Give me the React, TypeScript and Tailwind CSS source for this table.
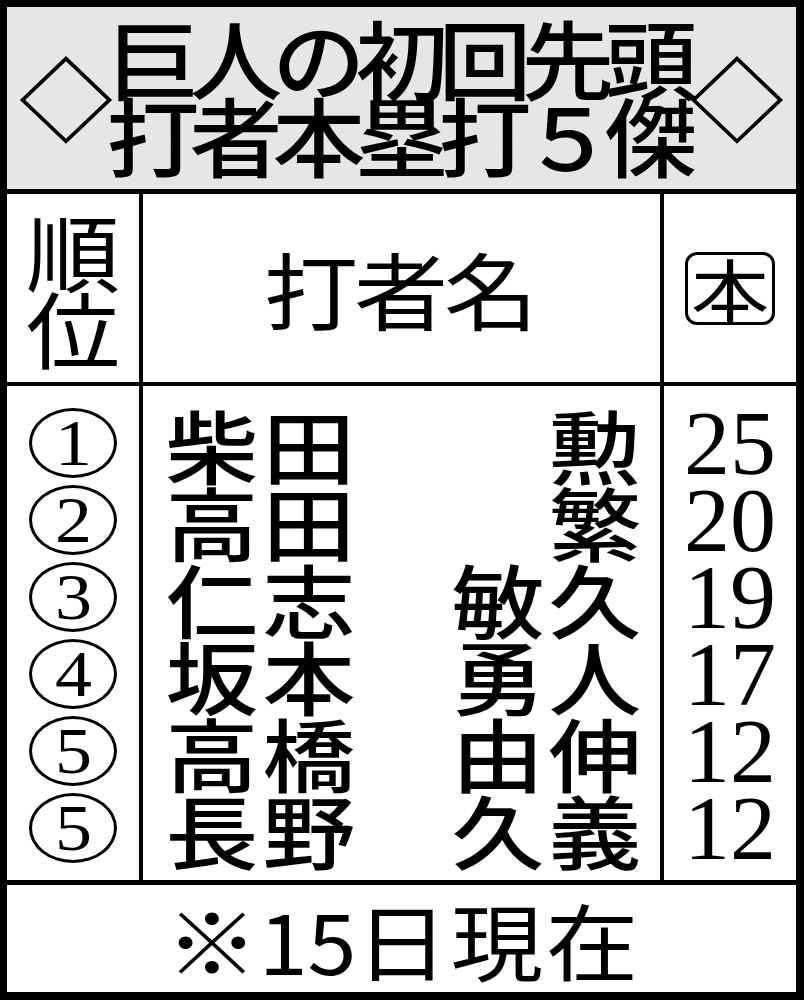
import React from "react";

const JP = "font-['Noto_Sans_CJK_JP','Noto_Sans_CJK_SC',sans-serif]";
const SERIF = "font-['Liberation_Serif','Times_New_Roman',serif]";

function Chars({ text, box, inner }: { text: string; box: string; inner: string }) {
  return (
    <>
      {Array.from(text).map((c, i) => (
        <span key={i} className={`inline-flex justify-center ${box}`}>
          <span className={`inline-block ${inner}`}>{c}</span>
        </span>
      ))}
    </>
  );
}

const rows = [
  { n: "1", f: "柴田", g: "　勲", hr: "25" },
  { n: "2", f: "高田", g: "　繁", hr: "20" },
  { n: "3", f: "仁志", g: "敏久", hr: "19" },
  { n: "4", f: "坂本", g: "勇人", hr: "17" },
  { n: "5", f: "高橋", g: "由伸", hr: "12" },
  { n: "5", f: "長野", g: "久義", hr: "12" },
];

export default function App() {
  return (
    <div className={`w-[804px] h-[1000px] bg-white text-black ${JP} font-medium border-l-[7px] border-t-[7px] border-r-[8px] border-b-[8px] border-black flex flex-col`}>
      {/* Title */}
      <div className="h-[187px] shrink-0 bg-[#e6e6e6] border-b-[5px] border-black flex items-center justify-center pb-[6px]">
        <div className="w-[90px] flex justify-center text-[90px] leading-none">
          <span className="inline-block scale-x-[1.05]">◇</span>
        </div>
        <div className="flex flex-col text-[86px] leading-none">
          <div className="h-[77px] flex items-center">
            <Chars text="巨人の初回先頭" box="w-[83px]" inner="scale-x-[1.08]" />
          </div>
          <div className="h-[77px] flex items-center">
            <Chars text="打者本塁打５傑" box="w-[83px]" inner="scale-x-[1.08]" />
          </div>
        </div>
        <div className="w-[90px] flex justify-center text-[90px] leading-none">
          <span className="inline-block scale-x-[1.05]">◇</span>
        </div>
      </div>

      {/* Header row */}
      <div className="h-[192px] shrink-0 border-b-[4px] border-black flex">
        <div className="w-[136px] shrink-0 border-r-[4px] border-black flex flex-col items-center justify-center text-[84px] leading-none font-normal">
          <div className="h-[77px] flex items-center">
            <span className="inline-block scale-x-[1.12]">順</span>
          </div>
          <div className="h-[77px] flex items-center">
            <span className="inline-block scale-x-[1.12]">位</span>
          </div>
        </div>
        <div className="w-[521px] shrink-0 border-r-[4px] border-black flex items-center justify-center text-[84px] leading-none font-normal">
          <Chars text="打者名" box="w-[90px]" inner="scale-x-[1.12]" />
        </div>
        <div className="w-[132px] shrink-0 flex items-center justify-center">
          <div className="w-[90px] h-[73px] border-[3.5px] border-black rounded-[12px] flex items-center justify-center text-[68px] leading-none font-normal">
            <span className="inline-block scale-x-[1.15]">本</span>
          </div>
        </div>
      </div>

      {/* Data rows */}
      <div className="h-[499px] shrink-0 border-b-[5px] border-black flex">
        <div className="w-[136px] shrink-0 border-r-[4px] border-black flex flex-col items-center pt-[18px]">
          {rows.map((r, i) => (
            <div key={i} className="h-[77px] flex items-center justify-center">
              <div className={`w-[88px] h-[70px] rounded-[50%] border-[3px] border-black flex items-center justify-center ${SERIF} font-normal text-[66px] leading-none`}>
                <span className="inline-block scale-x-[1.12]">{r.n}</span>
              </div>
            </div>
          ))}
        </div>
        <div className="w-[521px] shrink-0 border-r-[4px] border-black flex flex-col pt-[18px] pl-[20px] pr-[17px] text-[80px] leading-none">
          {rows.map((r, i) => (
            <div key={i} className="h-[77px] flex items-center justify-between">
              <div className="flex">
                <Chars text={r.f} box="w-[97px]" inner="scale-x-[1.16]" />
              </div>
              <div className="flex">
                <Chars text={r.g} box="w-[97px]" inner="scale-x-[1.16]" />
              </div>
            </div>
          ))}
        </div>
        <div className={`w-[132px] shrink-0 flex flex-col items-center pt-[18px] ${SERIF} font-normal text-[92px] leading-none`}>
          {rows.map((r, i) => (
            <div key={i} className="h-[77px] flex items-center justify-center">
              <span className="inline-block">{r.hr}</span>
            </div>
          ))}
        </div>
      </div>

      {/* Footer */}
      <div className="flex-1 flex items-center justify-center text-[84px] leading-none font-normal">
        <span className="inline-flex w-[98px] justify-center"><span className="inline-block scale-x-[1.1]">※</span></span>
        <span className="inline-flex w-[94px] justify-center"><span className="inline-block scale-x-[1.05]">15</span></span>
        <Chars text="日現在" box="w-[95px]" inner="scale-x-[1.1]" />
      </div>
    </div>
  );
}
